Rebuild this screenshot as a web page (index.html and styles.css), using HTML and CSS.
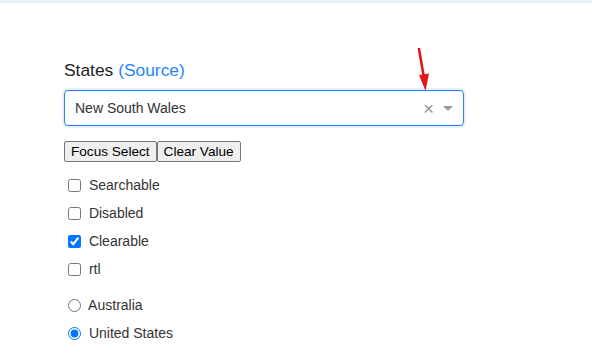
FILE: index.html
```html
<!DOCTYPE html>
<html lang="en">
<head>
  <meta charset="UTF-8">
  <meta name="viewport" content="width=device-width, initial-scale=1.0">
  <title>States</title>
  <link rel="stylesheet" href="styles.css">
</head>
<body>

<div class="top-bar"></div>

<div class="section">
  <h3 class="section-heading">States <a href="#" class="source-link">(Source)</a></h3>

  <div class="select is-focused">
    <div class="select-control">
      <span class="select-value">New South Wales</span>
      <span class="select-clear">&times;</span>
      <span class="select-arrow-zone"><span class="select-arrow"></span></span>
    </div>
  </div>

  <div class="buttons">
    <button type="button">Focus Select</button><button type="button">Clear Value</button>
  </div>

  <div class="checkbox-list">
    <label class="checkbox"><input type="checkbox"> Searchable</label>
    <label class="checkbox"><input type="checkbox"> Disabled</label>
    <label class="checkbox"><input type="checkbox" checked> Clearable</label>
    <label class="checkbox"><input type="checkbox"> rtl</label>
  </div>

  <div class="radio-list">
    <label class="checkbox"><input type="radio" name="country"> Australia</label>
    <label class="checkbox"><input type="radio" name="country" checked> United States</label>
  </div>

  <!-- annotation arrow pointing at the clear button -->
  <svg class="annotation" width="20" height="46" viewBox="0 0 20 46">
    <line x1="3" y1="1" x2="8" y2="30" stroke="#e3161d" stroke-width="2.6" stroke-linecap="round"/>
    <polygon points="3,27 13,25.5 9.5,43" fill="#e3161d"/>
  </svg>
</div>

</body>
</html>
```

FILE: styles.css
```css
body {
  font-family: 'Liberation Sans', Arial, sans-serif;
  margin: 0;
  padding: 0;
  background-color: #fff;
  color: #333;
}

.top-bar {
  height: 3px;
  background-color: #e6f0f9;
}

.section {
  position: relative;
  padding: 58px 0 0 64px;
}

.section-heading {
  font-size: 17.4px;
  font-weight: normal;
  line-height: 18px;
  color: #222;
  margin: 0 0 11px;
}

.source-link {
  color: #2684ff;
  text-decoration: none;
}

.select {
  width: 400px;
}

.select-control {
  display: flex;
  align-items: center;
  height: 34px;
  border: 1px solid #2684ff;
  border-radius: 4px;
  box-shadow: 0 0 0 2px rgba(38, 132, 255, 0.12);
  background-color: #fff;
}

.select-value {
  flex: 1;
  padding-left: 10px;
  font-size: 14px;
  color: #333;
}

.select-clear {
  width: 17px;
  text-align: center;
  font-size: 19px;
  line-height: 1;
  color: #999;
  margin-right: 1px;
}

.select-arrow-zone {
  width: 20px;
  padding-right: 5px;
  display: flex;
  justify-content: center;
}

.select-arrow {
  border-color: #999 transparent transparent;
  border-style: solid;
  border-width: 5px 5px 2.5px;
  width: 0;
  height: 0;
  margin-top: 2px;
}

.buttons {
  margin-top: 15px;
  margin-bottom: 9px;
}

.buttons button {
  font-family: 'Liberation Sans', Arial, sans-serif;
  font-size: 13.6px;
  color: #000;
  background-color: #efefef;
  border: 1px solid #767676;
  border-radius: 2px;
  padding: 1px 6px;
  height: 21px;
  margin: 0;
}

.checkbox-list,
.radio-list {
  display: flex;
  flex-direction: column;
}

.radio-list {
  margin-top: 8px;
}

.checkbox {
  display: flex;
  align-items: center;
  height: 28px;
  font-size: 14px;
  color: #333;
  white-space: pre;
}

.checkbox input {
  margin: 0 4px 0 4px;
}

.annotation {
  position: absolute;
  left: 416px;
  top: 45px;
}
```
